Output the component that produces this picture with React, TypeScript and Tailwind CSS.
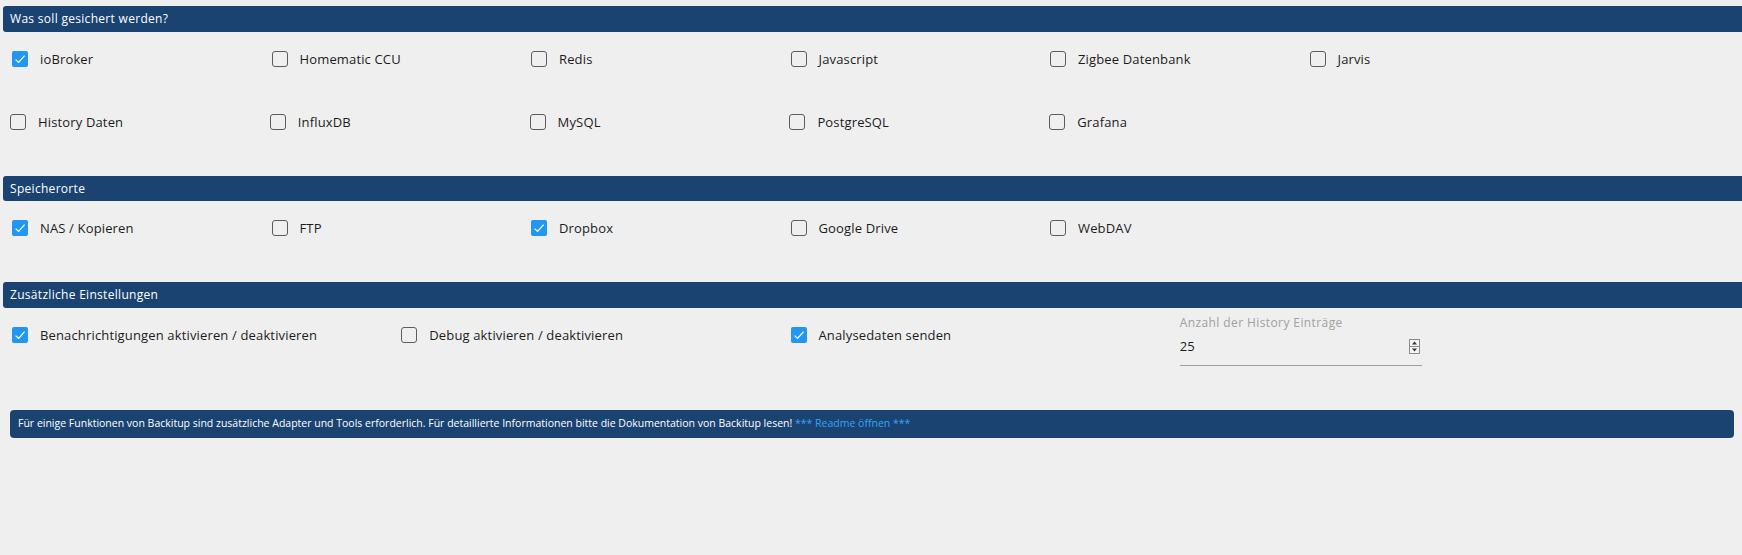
import React from 'react';

const Box = ({ checked }: { checked: boolean }) =>
  checked ? (
    <span className="flex h-[16px] w-[16px] shrink-0 items-center justify-center rounded-[2px] bg-[#2196f3]">
      <svg viewBox="0 0 16 16" className="h-[16px] w-[16px]">
        <path d="M3.6 8.6 L6.6 11.4 L12.6 4.6" fill="none" stroke="#ffffff" strokeWidth="1.2" />
      </svg>
    </span>
  ) : (
    <span className="block h-[16px] w-[16px] shrink-0 rounded-[3px] border-[1.5px] border-[#5c5c5c]" />
  );

const Item = ({ label, checked = false, w = 'w-[15%]' }: { label: string; checked?: boolean; w?: string }) => (
  <div className={`${w} flex shrink-0 items-center gap-[12px]`}>
    <Box checked={checked} />
    <span className="text-[13px] leading-[16px] tracking-[0.15px] text-[#1c1c1c]">{label}</span>
  </div>
);

const Header = ({ title, className = '' }: { title: string; className?: string }) => (
  <div className={`ml-[3px] flex items-center rounded-l-[3px] bg-[#1a4372] pl-[7px] ${className}`}>
    <span className="text-[12px] font-medium tracking-[0.3px] text-white">{title}</span>
  </div>
);

export default function App() {
  return (
    <div
      className="h-[555px] w-full overflow-hidden bg-[#efefef]"
      style={{ fontFamily: '"Open Sans", "Noto Sans", Arial, sans-serif' }}
    >
      {/* Was soll gesichert werden */}
      <Header title="Was soll gesichert werden?" className="mt-[6px] h-[26px]" />
      <div className="mt-[19px] flex pl-[12px]">
        <Item label="ioBroker" checked />
        <Item label="Homematic CCU" />
        <Item label="Redis" />
        <Item label="Javascript" />
        <Item label="Zigbee Datenbank" />
        <Item label="Jarvis" />
      </div>
      <div className="mt-[47px] flex pl-[10px]">
        <Item label="History Daten" />
        <Item label="InfluxDB" />
        <Item label="MySQL" />
        <Item label="PostgreSQL" />
        <Item label="Grafana" />
      </div>

      {/* Speicherorte */}
      <Header title="Speicherorte" className="mt-[46px] h-[25px]" />
      <div className="mt-[19px] flex pl-[12px]">
        <Item label="NAS / Kopieren" checked />
        <Item label="FTP" />
        <Item label="Dropbox" checked />
        <Item label="Google Drive" />
        <Item label="WebDAV" />
      </div>

      {/* Zusätzliche Einstellungen */}
      <Header title="Zusätzliche Einstellungen" className="mt-[46px] h-[26px]" />
      <div className="mt-[8px] flex items-start pl-[12px]">
        <div className="flex w-[22.5%] shrink-0 pt-[11px]">
          <Item label="Benachrichtigungen aktivieren / deaktivieren" checked w="w-full" />
        </div>
        <div className="flex w-[22.5%] shrink-0 pt-[11px]">
          <Item label="Debug aktivieren / deaktivieren" w="w-full" />
        </div>
        <div className="flex w-[22.5%] shrink-0 pt-[11px]">
          <Item label="Analysedaten senden" checked w="w-full" />
        </div>
        <div className="w-[242px] shrink-0">
          <div className="text-[12px] leading-[14px] tracking-[0.4px] text-[#a0a0a0]">Anzahl der History Einträge</div>
          <div className="flex h-[36px] items-center justify-between border-b border-[#9e9e9e] pb-[2px] pr-[2px]">
            <span className="text-[13px] text-[#1c1c1c]">25</span>
            <svg viewBox="0 0 11 15" className="h-[15px] w-[11px]">
              <rect x="0.5" y="0.5" width="10" height="14" fill="#f4f4f4" stroke="#8a8a8a" />
              <line x1="0.5" y1="7.5" x2="10.5" y2="7.5" stroke="#8a8a8a" />
              <path d="M3 5.5 L5.5 2.5 L8 5.5 Z" fill="#333" />
              <path d="M3 9.5 L5.5 12.5 L8 9.5 Z" fill="#333" />
            </svg>
          </div>
        </div>
      </div>

      {/* Info */}
      <div className="ml-[10px] mr-[8px] mt-[44px] flex h-[28px] items-center rounded-[4px] bg-[#1a4372] px-[8px]">
        <span className="text-[10.5px] text-white">
          Für einige Funktionen von Backitup sind zusätzliche Adapter und Tools erforderlich. Für detaillierte Informationen bitte die Dokumentation von Backitup lesen!{' '}
          <span className="text-[#3ba0f5]">*** Readme öffnen ***</span>
        </span>
      </div>
    </div>
  );
}
